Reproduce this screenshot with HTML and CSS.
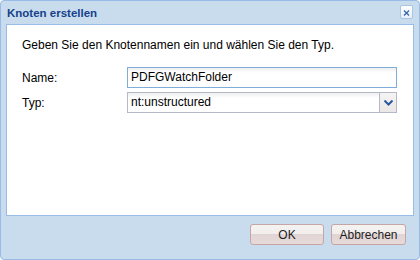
FILE: index.html
```html
<!DOCTYPE html>
<html lang="de">
<head>
<meta charset="utf-8">
<title>Knoten erstellen</title>
<link rel="stylesheet" href="styles.css">
</head>
<body>
<div class="window">
  <div class="header">
    <span class="title">Knoten erstellen</span>
    <span class="tool-close">
      <svg width="13" height="14" viewBox="0 0 13 14">
        <path d="M3.5 4 L9.5 10 M9.5 4 L3.5 10" stroke="#2f63a8" stroke-width="1.4" fill="none"/>
      </svg>
    </span>
  </div>
  <div class="body">
    <p class="intro">Geben Sie den Knotennamen ein und wählen Sie den Typ.</p>
    <div class="row">
      <label class="label">Name:</label>
      <div class="field focus">PDFGWatchFolder</div>
    </div>
    <div class="row">
      <label class="label">Typ:</label>
      <div class="field combo">
        <span class="value">nt:unstructured</span>
        <span class="trigger">
          <svg width="9" height="6" viewBox="0 0 9 6">
            <path d="M0.5 0.5 L4.5 4.5 L8.5 0.5" stroke="#2b5a9c" stroke-width="2" fill="none"/>
          </svg>
        </span>
      </div>
    </div>
  </div>
  <div class="footer">
    <button class="btn btn-ok">OK</button>
    <button class="btn btn-cancel">Abbrechen</button>
  </div>
</div>
</body>
</html>
```
FILE: styles.css
```css
html, body {
  margin: 0;
  padding: 0;
  background: #ffffff;
}
.window {
  box-sizing: border-box;
  width: 420px;
  height: 260px;
  border: 1px solid #99bbe8;
  border-radius: 4px;
  background: #c8dcee;
  padding: 0 5px;
  display: flex;
  flex-direction: column;
  font-family: "Liberation Sans", Arial, sans-serif;
}
.header {
  height: 23px;
  display: flex;
  align-items: center;
  justify-content: space-between;
  padding-left: 1px;
}
.title {
  font-size: 11.5px;
  font-weight: bold;
  color: #15428b;
}
.tool-close {
  box-sizing: border-box;
  width: 13px;
  height: 14px;
  margin-right: 1px;
  margin-top: -1px;
  border: 1px solid #a9c5e0;
  border-radius: 2px;
  background: linear-gradient(#ffffff, #e6eff8);
  display: flex;
}
.body {
  box-sizing: border-box;
  height: 192px;
  border: 1px solid #99bbe8;
  background: #ffffff;
  padding: 12px 16px 0 15px;
  font-size: 12px;
  color: #000;
}
.intro {
  margin: 0 0 14px 0;
  line-height: 16px;
}
.row {
  display: flex;
  align-items: center;
  margin-bottom: 4px;
}
.label {
  width: 105px;
}
.field {
  box-sizing: border-box;
  flex: 1;
  height: 21px;
  border: 1px solid #b5b8c8;
  background: linear-gradient(#eeeeee, #ffffff 5px);
  padding-left: 3px;
  line-height: 19px;
  display: flex;
  align-items: center;
}
.field.focus {
  border-color: #7eadd9;
}
.combo {
  padding-right: 0;
}
.combo .value {
  flex: 1;
}
.trigger {
  box-sizing: border-box;
  width: 17px;
  height: 19px;
  border-left: 1px solid #b5b8c8;
  background: linear-gradient(#f5f3f3, #ebe7e7);
  display: flex;
  align-items: center;
  justify-content: center;
}
.footer {
  height: 43px;
  box-sizing: border-box;
  padding: 8px 8px 0 0;
  display: flex;
  justify-content: flex-end;
  align-items: flex-start;
  gap: 7px;
}
.btn {
  box-sizing: border-box;
  height: 21px;
  border: 1px solid #c7a5a5;
  border-radius: 3px;
  background: linear-gradient(#f5f2f2 0, #f2eeee 50%, #e2d4d4 50%, #e6dada 100%);
  font-family: "Liberation Sans", Arial, sans-serif;
  font-size: 12px;
  color: #222;
  padding: 0;
}
.btn-ok {
  width: 74px;
}
.btn-cancel {
  width: 75px;
}
```
